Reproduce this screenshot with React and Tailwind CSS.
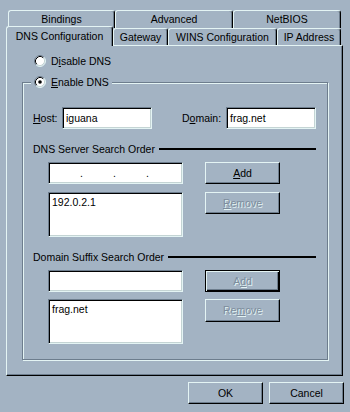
import React from 'react';

// Win95-style "TCP/IP Properties" DNS tab
const Radio = ({ checked }) => (
  <svg width="12" height="12" viewBox="0 0 12 12" className="shrink-0">
    <circle cx="6" cy="6" r="5" fill="#ffffff" />
    <path d="M2.11 9.89 A5.5 5.5 0 0 1 9.89 2.11" fill="none" stroke="#6d7d8d" strokeWidth="1" />
    <path d="M9.89 2.11 A5.5 5.5 0 0 1 2.11 9.89" fill="none" stroke="#e4f4f4" strokeWidth="1" />
    <path d="M2.82 9.18 A4.5 4.5 0 0 1 9.18 2.82" fill="none" stroke="#000000" strokeWidth="1" />
    <path d="M9.18 2.82 A4.5 4.5 0 0 1 2.82 9.18" fill="none" stroke="#c4d4d4" strokeWidth="1" />
    {checked && <circle cx="6" cy="6" r="1.8" fill="#000000" />}
  </svg>
);

const Tab = ({ className, children }) => (
  <div className={`flex items-center justify-center border-l border-t border-r border-l-[#e4f4f4] border-t-[#e4f4f4] border-r-black rounded-t-[3px] shadow-[inset_-1px_0_0_#6d7d8d] ${className}`}>
    {children}
  </div>
);

const Button = ({ children, disabled, isDefault, className = '' }) => (
  <div
    className={`flex items-center justify-center w-[75px] ${
      isDefault
        ? 'border border-black shadow-[inset_1px_1px_0_#e4f4f4,inset_-1px_-1px_0_#000000,inset_-2px_-2px_0_#6d7d8d]'
        : 'border border-t-[#e4f4f4] border-l-[#e4f4f4] border-r-black border-b-black shadow-[inset_-1px_-1px_0_#6d7d8d]'
    } ${disabled ? 'text-[#7d8d9d] [text-shadow:1px_1px_0_#e4f4f4]' : 'text-black'} ${className}`}
  >
    {children}
  </div>
);

const Sunken = ({ className = '', children }) => (
  <div className={`bg-white border border-t-[#6d7d8d] border-l-[#6d7d8d] border-r-[#e4f4f4] border-b-[#e4f4f4] shadow-[inset_1px_1px_0_#000000,inset_-1px_-1px_0_#c4d4d4] ${className}`}>
    {children}
  </div>
);

const SectionLabel = ({ children }) => (
  <div className="flex items-center h-[14px] mt-[13px]">
    <span className="ml-[10px] whitespace-nowrap">{children}</span>
    <div className="flex-1 ml-[4px] mr-[11px] h-[2px] bg-black" />
  </div>
);

export default function App() {
  return (
    <div className="w-[350px] h-[412px] bg-[#a3b3c3] text-black text-[10.5px] leading-none [font-family:'Liberation_Sans',Arial,sans-serif] flex flex-col overflow-hidden">
      {/* back row of tabs */}
      <div className="flex ml-[8px] mt-[10px] h-[18px]">
        <Tab className="w-[107px]">Bindings</Tab>
        <Tab className="w-[118px]">Advanced</Tab>
        <Tab className="w-[108px]">NetBIOS</Tab>
      </div>
      {/* front row of tabs */}
      <div className="flex items-end h-[17px]">
        <Tab className="ml-[6px] w-[107px] h-[20px] -mb-[1px] relative z-10 bg-[#a3b3c3] pb-[1px]">DNS Configuration</Tab>
        <Tab className="w-[55px] h-[17px]">Gateway</Tab>
        <Tab className="w-[109px] h-[17px]">WINS Configuration</Tab>
        <Tab className="w-[64px] h-[17px]">IP Address</Tab>
      </div>

      {/* tab page */}
      <div className="ml-[6px] w-[337px] h-[331px] border border-l-[#e4f4f4] border-t-[#e4f4f4] border-r-black border-b-black shadow-[inset_-1px_-1px_0_#6d7d8d] flex flex-col">
        <div className="flex items-center gap-[5px] h-[16px] mt-[7px] ml-[27px]">
          <Radio />
          <span>D<u>i</u>sable DNS</span>
        </div>

        <div className="mt-[13px] ml-[15px] w-[306px] h-[278px] border border-[#6d7d8d] shadow-[inset_1px_1px_0_#e4f4f4,1px_1px_0_#e4f4f4] flex flex-col">
          <div className="self-start flex items-center gap-[5px] h-[16px] -mt-[9px] ml-[8px] px-[3px] bg-[#a3b3c3]">
            <Radio checked />
            <span><u>E</u>nable DNS</span>
          </div>

          <div className="flex items-center h-[22px] mt-[17px]">
            <span className="ml-[10px] w-[29px]"><u>H</u>ost:</span>
            <Sunken className="w-[90px] h-[22px] flex items-center pl-[3px]">iguana</Sunken>
            <span className="ml-[30px] w-[44px]">D<u>o</u>main:</span>
            <Sunken className="w-[90px] h-[22px] flex items-center pl-[3px]">frag.net</Sunken>
          </div>

          <SectionLabel>DNS Server Search Order</SectionLabel>
          <div className="flex mt-[6px]">
            <div className="ml-[25px] w-[135px] flex flex-col gap-[8px]">
              <Sunken className="h-[22px] flex items-center pl-[31px] gap-[30px]">
                <span className="w-[3px] text-center">.</span>
                <span className="w-[3px] text-center">.</span>
                <span className="w-[3px] text-center">.</span>
              </Sunken>
              <Sunken className="h-[45px] pl-[3px] pt-[2px] leading-[14px]">192.0.2.1</Sunken>
            </div>
            <div className="ml-[22px] flex flex-col gap-[8px]">
              <Button className="h-[22px]"><span><u>A</u>dd</span></Button>
              <Button className="h-[22px]" disabled><span><u>R</u>emove</span></Button>
            </div>
          </div>

          <SectionLabel>Domain Suffix Search Order</SectionLabel>
          <div className="flex mt-[6px]">
            <div className="ml-[25px] w-[135px] flex flex-col gap-[7px]">
              <Sunken className="h-[22px]" />
              <Sunken className="h-[45px] pl-[3px] pt-[2px] leading-[14px]">frag.net</Sunken>
            </div>
            <div className="ml-[22px] flex flex-col gap-[7px]">
              <Button className="h-[22px]" disabled isDefault><span>A<u>d</u>d</span></Button>
              <Button className="h-[23px]" disabled><span>Re<u>m</u>ove</span></Button>
            </div>
          </div>
        </div>
      </div>

      {/* dialog buttons */}
      <div className="flex gap-[6px] ml-[188px] mt-[6px]">
        <Button className="h-[22px]">OK</Button>
        <Button className="h-[22px]">Cancel</Button>
      </div>
    </div>
  );
}
